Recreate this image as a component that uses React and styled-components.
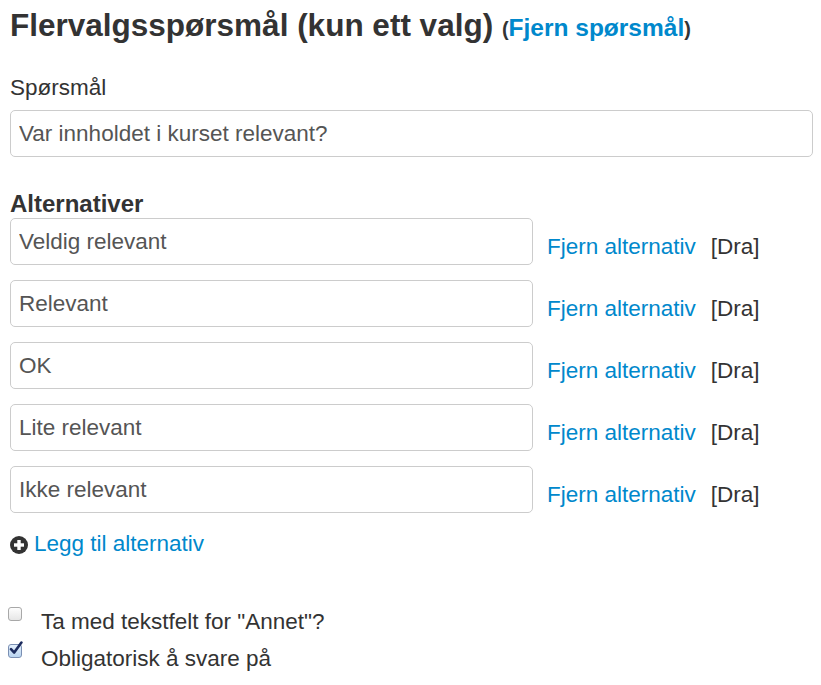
import styled, { createGlobalStyle } from 'styled-components';

const GlobalStyle = createGlobalStyle`
	body {
		margin: 0;
		background: #fff;
		font-family: 'Liberation Sans', Arial, sans-serif;
		color: #333;
	}
`;

const alternatives = [
	'Veldig relevant',
	'Relevant',
	'OK',
	'Lite relevant',
	'Ikke relevant',
];

function PlusIcon() {
	return (
		<svg width="18" height="18" viewBox="0 0 18 18">
			<circle cx="9" cy="9" r="9" fill="#333" />
			<rect x="4" y="7.3" width="10" height="3.4" fill="#fff" />
			<rect x="7.3" y="4" width="3.4" height="10" fill="#fff" />
		</svg>
	);
}

function App() {
	return (
		<Page>
			<GlobalStyle />
			<Heading>
				Flervalgsspørsmål (kun ett valg) <Small>(<HeadLink>Fjern spørsmål</HeadLink>)</Small>
			</Heading>

			<Label>Spørsmål</Label>
			<TextInput defaultValue="Var innholdet i kurset relevant?" $wide />

			<SectionTitle>Alternativer</SectionTitle>
			<AltList>
				{alternatives.map((alt) => (
					<AltRow key={alt}>
						<TextInput defaultValue={alt} />
						<Link>Fjern alternativ</Link>
						<Drag>[Dra]</Drag>
					</AltRow>
				))}
			</AltList>

			<AddRow>
				<PlusIcon />
				<Link>Legg til alternativ</Link>
			</AddRow>

			<Checks>
				<CheckRow>
					<CheckBox />
					<span>Ta med tekstfelt for "Annet"?</span>
				</CheckRow>
				<CheckRow>
					<CheckBox $checked>
						<svg width="16" height="16" viewBox="0 0 16 16">
							<path
								d="M3 8.2 L6.2 11.6 L13.4 1.6"
								fill="none"
								stroke="#1c2b5e"
								strokeWidth="2.6"
								strokeLinecap="round"
								strokeLinejoin="round"
							/>
						</svg>
					</CheckBox>
					<span>Obligatorisk å svare på</span>
				</CheckRow>
			</Checks>
		</Page>
	);
}

const Page = styled.div`
	display: flex;
	flex-direction: column;
	padding: 5px 8px 0 10px;
	font-size: 22.5px;
	line-height: 28px;
`;

const Heading = styled.h1`
	margin: 0;
	font-size: 31.5px;
	line-height: 40px;
	font-weight: bold;
	color: #333;
	white-space: nowrap;
`;

const Small = styled.span`
	font-size: 20px;
`;

const HeadLink = styled.a`
	font-size: 24.5px;
	color: #0088cc;
	text-decoration: none;
`;

const Label = styled.div`
	margin-top: 25px;
	color: #333;
`;

const TextInput = styled.input.attrs({ type: 'text' })`
	box-sizing: border-box;
	width: ${(p) => (p.$wide ? '803px' : '523px')};
	height: 47px;
	margin: ${(p) => (p.$wide ? '8px 0 0' : '0')};
	padding: 9px 8px 8px;
	border: 1px solid #ccc;
	border-radius: 5px;
	font-family: 'Liberation Sans', Arial, sans-serif;
	font-size: 22.5px;
	line-height: 28px;
	color: #555;
	background: #fff;
	outline: none;
	flex-shrink: 0;
`;

const SectionTitle = styled.div`
	margin-top: 33px;
	font-size: 24px;
	font-weight: bold;
	color: #333;
`;

const AltList = styled.div`
	display: flex;
	flex-direction: column;
	gap: 15px;
`;

const AltRow = styled.div`
	display: flex;
	align-items: flex-start;
`;

const Link = styled.a`
	color: #0088cc;
	text-decoration: none;
	cursor: pointer;
	white-space: nowrap;

	${AltRow} & {
		margin: 15px 0 0 14px;
	}
`;

const Drag = styled.span`
	margin: 15px 0 0 15px;
	color: #333;
`;

const AddRow = styled.div`
	display: flex;
	align-items: center;
	gap: 6px;
	margin-top: 17px;

	svg {
		margin-top: 1px;
	}
`;

const Checks = styled.div`
	display: flex;
	flex-direction: column;
	margin-top: 45px;
`;

const CheckRow = styled.label`
	display: flex;
	align-items: flex-start;
	line-height: 37px;
	margin-left: -2px;
	color: #333;
`;

const CheckBox = styled.span`
	position: relative;
	box-sizing: border-box;
	width: 14px;
	height: 14px;
	margin: 4px 19px 0 0;
	border: 1px solid ${(p) => (p.$checked ? '#7a8fb3' : '#a8a8a8')};
	border-radius: 3px;
	background: ${(p) =>
		p.$checked
			? 'linear-gradient(#e4f0fc, #b9d4f0)'
			: 'linear-gradient(#fdfdfd, #e6e6e6)'};
	flex-shrink: 0;

	svg {
		position: absolute;
		left: -1px;
		top: -4px;
	}
`;

export default App;
